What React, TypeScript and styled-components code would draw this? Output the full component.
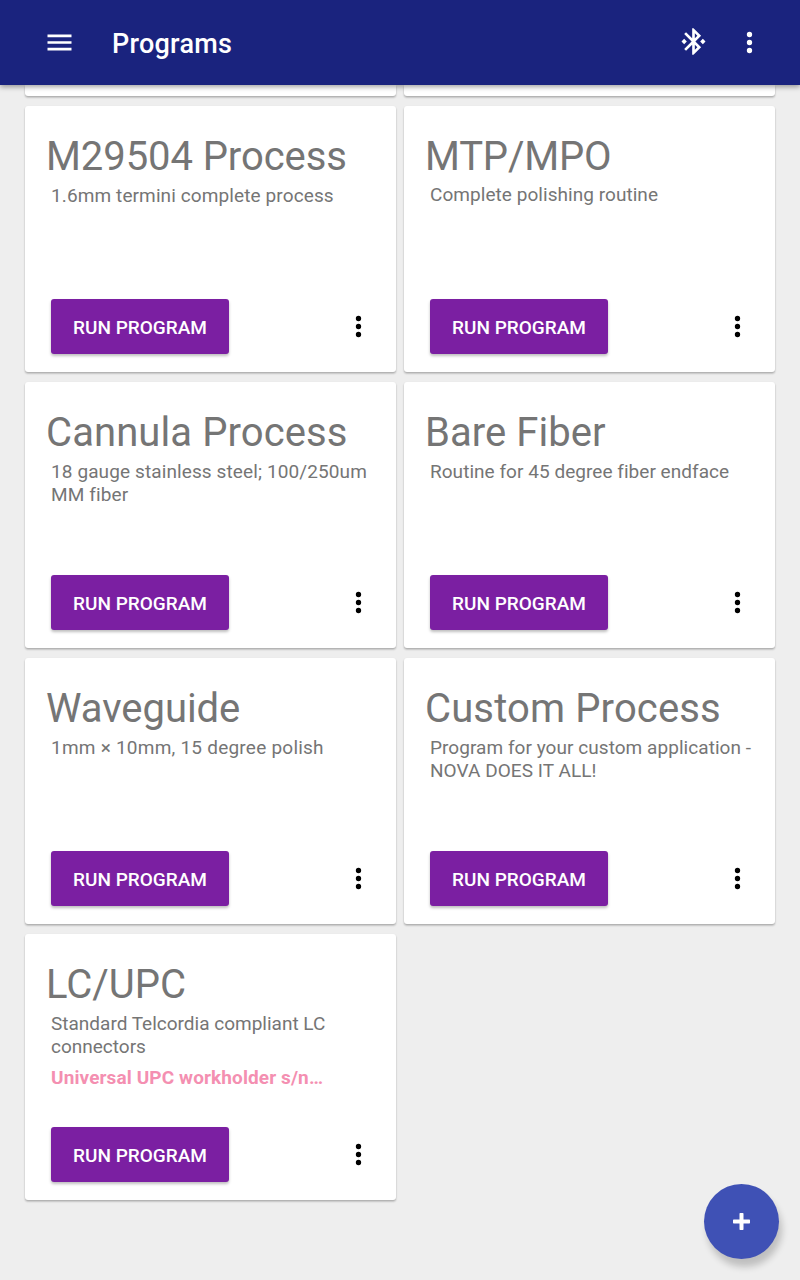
import React from 'react';
import styled, { createGlobalStyle } from 'styled-components';

const GlobalStyle = createGlobalStyle`
  * { box-sizing: border-box; }
  body {
    margin: 0;
    background: #eeeeee;
    font-family: Roboto, "Liberation Sans", sans-serif;
  }
`;

const Screen = styled.div`
  position: relative;
  display: flex;
  flex-direction: column;
  width: 800px;
  height: 1280px;
  overflow: hidden;
  background: #eeeeee;
`;

const AppBar = styled.header`
  position: relative;
  z-index: 1;
  flex: none;
  display: flex;
  align-items: center;
  height: 85px;
  padding: 0 35px 0 44px;
  background: #1a237e;
  color: #fff;
  box-shadow: 0 2px 5px rgba(0, 0, 0, 0.36);
`;

const AppTitle = styled.h1`
  flex: 1;
  margin: 2px 0 0 36px;
  font-size: 27px;
  font-weight: 500;
  line-height: 32px;
  letter-spacing: 0.25px;
`;

const IconButton = styled.button<{ $color?: string }>`
  display: flex;
  padding: 0;
  border: 0;
  background: none;
  color: ${(p) => p.$color ?? '#000'};
`;

const AppActions = styled.div`
  display: flex;
  gap: 24px;
`;

const Grid = styled.main`
  display: grid;
  grid-template-columns: 371px 371px;
  grid-template-rows: 11px;
  grid-auto-rows: 266px;
  gap: 10px 8px;
  padding: 0 25px;
`;

const cardShadow = '0 1px 2px rgba(0, 0, 0, 0.2), 0 2px 2px rgba(0, 0, 0, 0.12)';

const CardEdge = styled.div`
  border-radius: 0 0 3px 3px;
  background: #fff;
  box-shadow: ${cardShadow};
`;

const Card = styled.article`
  display: flex;
  flex-direction: column;
  padding: 27px 18px 18px 26px;
  border-radius: 3px;
  background: #fff;
  box-shadow: ${cardShadow};
`;

const CardTitle = styled.h2<{ $tracking: number }>`
  margin: 0 0 0 -5px;
  color: #757575;
  font-size: 40px;
  font-weight: 400;
  line-height: 48px;
  letter-spacing: ${(p) => p.$tracking}px;
  white-space: nowrap;
`;

const Description = styled.p<{ $tracking: number; $raised?: boolean }>`
  margin: ${(p) => (p.$raised ? '2px' : '3px')} 0 0;
  color: #757575;
  font-size: 19px;
  line-height: 23px;
  letter-spacing: ${(p) => p.$tracking}px;
`;

const Note = styled.p`
  margin: 8px 0 0;
  color: #f48fb1;
  font-size: 19px;
  font-weight: 700;
  line-height: 23px;
  letter-spacing: 0.11px;
`;

const CardActions = styled.div`
  display: flex;
  align-items: center;
  justify-content: space-between;
  margin: auto 3px 0 0;
`;

const RunButton = styled.button`
  width: 178px;
  height: 55px;
  padding: 2px 0 0;
  border: 0;
  border-radius: 3px;
  background: #7b1fa2;
  color: #fff;
  font: 500 19px/22px Roboto, "Liberation Sans", sans-serif;
  box-shadow: 0 2px 3px rgba(0, 0, 0, 0.26);
`;

const Fab = styled.button`
  position: absolute;
  right: 21px;
  bottom: 21px;
  display: flex;
  align-items: center;
  justify-content: center;
  width: 75px;
  height: 75px;
  padding: 0;
  border: 0;
  border-radius: 50%;
  background: #3f51b5;
  color: #fff;
  box-shadow: 3px 8px 7px rgba(0, 0, 0, 0.2);
`;

const Icon = ({ d, x = 0.375, y = 0.375 }: { d: string; x?: number; y?: number }) => (
  <svg width="32" height="32" viewBox={`${x} ${y} 24 24`} fill="currentColor" aria-hidden="true">
    <path d={d} />
  </svg>
);

const MENU = 'M3 18h18v-2H3v2zm0-5h18v-2H3v2zm0-7v2h18V6H3z';
const MORE =
  'M12 8a2 2 0 1 0 0-4 2 2 0 0 0 0 4zm0 2a2 2 0 1 0 0 4 2 2 0 0 0 0-4zm0 6a2 2 0 1 0 0 4 2 2 0 0 0 0-4z';
const BLUETOOTH =
  'M7 12l-2-2-2 2 2 2 2-2zm10.71-4.29L12 2h-1v7.59L6.41 5 5 6.41 10.59 12 5 17.59 6.41 19 11 14.41V22h1l5.71-5.71-4.3-4.29 4.3-4.29zM13 5.83l1.88 1.88L13 9.59V5.83zm1.88 10.46L13 18.17v-3.76l1.88 1.88zM19 10l-2 2 2 2 2-2-2-2z';

interface Program {
  title: string;
  titleTracking: number;
  description: string;
  tracking: number;
  note?: string;
  raised?: boolean;
}

const programs: Program[] = [
  {
    title: 'M29504 Process',
    titleTracking: -0.08,
    description: '1.6mm termini complete process',
    tracking: 0.11,
  },
  {
    title: 'MTP/MPO',
    titleTracking: -0.18,
    description: 'Complete polishing routine',
    tracking: 0.05,
    raised: true,
  },
  {
    title: 'Cannula Process',
    titleTracking: 0.1,
    description: '18 gauge stainless steel; 100/250um MM fiber',
    tracking: 0.11,
  },
  {
    title: 'Bare Fiber',
    titleTracking: 0.05,
    description: 'Routine for 45 degree fiber endface',
    tracking: 0.04,
  },
  {
    title: 'Waveguide',
    titleTracking: -0.04,
    description: '1mm × 10mm, 15 degree polish',
    tracking: 0.23,
  },
  {
    title: 'Custom Process',
    titleTracking: 0.14,
    description: 'Program for your custom application - NOVA DOES IT ALL!',
    tracking: 0.05,
  },
  {
    title: 'LC/UPC',
    titleTracking: 0,
    description: 'Standard Telcordia compliant LC connectors',
    tracking: 0,
    note: 'Universal UPC workholder s/n…',
  },
];

export default function App() {
  return (
    <>
      <GlobalStyle />
      <Screen>
        <AppBar>
          <IconButton $color="#fff" aria-label="Menu">
            <Icon d={MENU} />
          </IconButton>
          <AppTitle>Programs</AppTitle>
          <AppActions>
            <IconButton $color="#fff" aria-label="Bluetooth">
              <Icon d={BLUETOOTH} x={-0.375} y={1.1} />
            </IconButton>
            <IconButton $color="#fff" aria-label="More">
              <Icon d={MORE} x={-0.375} />
            </IconButton>
          </AppActions>
        </AppBar>
        <Grid>
          <CardEdge />
          <CardEdge />
          {programs.map((p) => (
            <Card key={p.title}>
              <CardTitle $tracking={p.titleTracking}>{p.title}</CardTitle>
              <Description $tracking={p.tracking} $raised={p.raised}>
                {p.description}
              </Description>
              {p.note && <Note>{p.note}</Note>}
              <CardActions>
                <RunButton>RUN PROGRAM</RunButton>
                <IconButton aria-label="Program options">
                  <Icon d={MORE} />
                </IconButton>
              </CardActions>
            </Card>
          ))}
        </Grid>
        <Fab aria-label="Add program">
          <svg width="17" height="17" viewBox="0 0 17 17" fill="currentColor" aria-hidden="true">
            <rect x="6.5" y="0" width="4" height="17" rx="0.7" />
            <rect x="0" y="6.5" width="17" height="4" rx="0.7" />
          </svg>
        </Fab>
      </Screen>
    </>
  );
}
